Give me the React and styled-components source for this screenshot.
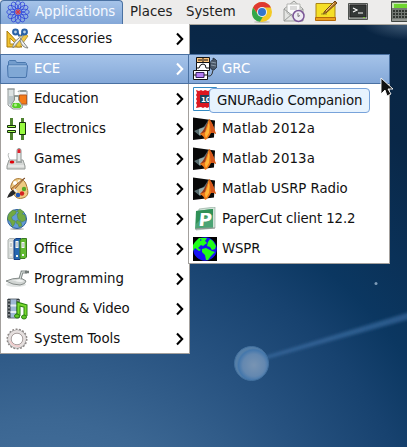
import React from "react";
import styled, { createGlobalStyle, css } from "styled-components";

const GlobalStyle = createGlobalStyle`
  * { box-sizing: border-box; }
  body { margin: 0; overflow: hidden; }
`;

const Desktop = styled.main`
  position: relative;
  width: 407px;
  height: 447px;
  overflow: hidden;
  font: 13.33px/20px "DejaVu Sans", sans-serif;
  color: #111;
  background:
    radial-gradient(ellipse 46px 18px at 407px 22px, #48627c, transparent),
    radial-gradient(circle at 40px 610px, #527da9 0, #3c6793 190px, #275280 300px, #17426f 390px, #0b3761 445px, #0a3158 500px, #092747 590px, #092441 700px);
`;

const Wallpaper = styled.svg`
  position: absolute;
  inset: 0;
`;

const Panel = styled.header`
  position: relative;
  display: flex;
  width: 407px;
  height: 25px;
  background: #edeceb;
  border-bottom: 1px solid #aaa79f;
`;

const selected = css`
  color: #fff;
  background: linear-gradient(#a5c3e9, #84a8d8);
`;

const PanelMenu = styled.button`
  display: flex;
  flex: none;
  align-items: center;
  height: 24px;
  width: ${(p) => p.$width}px;
  padding: 0 0 1px ${(p) => p.$inset}px;
  border: 0;
  background: transparent;
  color: #222;
  font: inherit;
  white-space: nowrap;
  ${(p) => p.$open && css`
    ${selected}
    color: #f4f8ff;
    letter-spacing: -0.1px;
    border: 1px solid #4a71a2;
    border-bottom: 0;
    border-radius: 4px 4px 0 0;
    gap: 5px;
  `}
`;

const Launchers = styled.div`
  display: flex;
  flex: none;
  gap: 8px;
  margin-left: 6px;
`;

const Menu = styled.nav`
  position: absolute;
  left: ${(p) => p.$x}px;
  top: ${(p) => p.$y}px;
  width: ${(p) => p.$width}px;
  border: 1px solid #a3a09d;
  border-top-width: ${(p) => (p.$flush ? 0 : 1)}px;
  background: #fff;
`;

const Item = styled.div`
  display: flex;
  align-items: center;
  height: 30px;
  padding: 0 3px 0 ${(p) => p.$inset}px;
  gap: ${(p) => p.$gap || 4}px;
  margin: 0 -1px;
  white-space: nowrap;
  &:first-child { margin-top: -${(p) => p.$lift || 0}px; }
  &:last-child { margin-bottom: -1px; }
  svg { flex: none; }
  ${(p) => p.$active && css`
    ${selected}
    border: 1px solid #4a71a2;
    padding: 0 2px 0 ${p.$inset - 1}px;
  `}
`;

const Label = styled.span`
  flex: 1;
  letter-spacing: ${(p) => p.$tracking || 0}px;
`;

const Tooltip = styled.div`
  position: absolute;
  left: 209px;
  top: 88px;
  width: 161px;
  height: 25px;
  padding: 2px 7px;
  border: 1px solid #78a3da;
  border-radius: 4px;
  background: #e7f3fe;
  letter-spacing: -0.13px;
  white-space: nowrap;
`;

const Pointer = styled.svg`
  position: absolute;
  left: 380px;
  top: 77px;
`;

const Icon = ({ children, size = 24 }) => (
  <svg width={size} height={size} viewBox="0 0 24 24">{children}</svg>
);

const Arrow = ({ light }) => (
  <svg width="14" height="16" viewBox="0 0 14 16">
    <path d="M4 2.5 9.2 8 4 13.5" fill="none" stroke={light ? "#fff" : "#000"} strokeWidth="2.1" />
  </svg>
);

const Spiro = () => (
  <Icon>
    <circle cx="12" cy="12" r="9" fill="#8fa9e6" opacity=".5" />
    <g fill="none" stroke="#2338d8" strokeWidth="0.7">
      {[0, 30, 60, 90, 120, 150, 180, 210, 240, 270, 300, 330].map((a) => (
        <ellipse key={a} cx="12" cy="6" rx="2.8" ry="5.2" transform={`rotate(${a} 12 12)`} />
      ))}
    </g>
    <circle cx="12" cy="12" r="3" fill="#8088cd" />
    <path d="M12 9v6M9 12h6M10 10l4 4M14 10l-4 4" stroke="#d93843" />
  </Icon>
);

const Accessories = () => (
  <Icon>
    <path d="M1 4v16h15z" fill="#f2c332" stroke="#a97b08" />
    <path d="M4 11v6h6z" fill="#fff" stroke="#b88a12" />
    <path d="M16 6h2l4 3-8 11h-3l-1-2z" fill="#f1c945" stroke="#a47d1b" strokeWidth=".7" />
    <path d="m12 8 3 4 7 9q-6 0-8-8M18 8l-4 5-7 8q-1-5 6-10" fill="#eee" stroke="#858783" />
    <g fill="#bdd4e8" stroke="#2861a7" strokeWidth="2"><circle cx="9.5" cy="5" r="2.4" /><circle cx="18.5" cy="5" r="2.4" /></g>
    <path d="m11.500 6 2 3m3.500-3-2 3" stroke="#2861a7" strokeWidth="2" />
  </Icon>
);

const Folder = () => (
  <Icon>
    <path d="M2.5 19V4.500l1-1h6l1 2h9l1 1V9" fill="#739dcd" stroke="#4a78ae" />
    <path d="M1.5 9q0-1 1-1h18q1 0 1 1l-1 10q0 1.500-1.500 1.500H3.500Q2 20.500 2 19z" fill="#80a8d5" stroke="#4774ac" />
    <path d="M3 9h17.500" stroke="#b5d0ef" />
  </Icon>
);

const Education = () => (
  <Icon>
    <path d="M2 2h6v16q-3 4-6 0zM1 2h8" fill="#dce2e2" stroke="#929999" />
    <path d="M3 9h4v8H3z" fill="#b9c5c9" />
    <path d="M12 5q0-1 1-1h8v14h-8" fill="#eff2f1" stroke="#909897" />
    <path d="M13.500 8h7v9h-7z" fill="#f57b16" stroke="#b65b23" />
    <path d="M8.500 9v4L5 18q-1 3 2 4h7q4-1 2-4l-3.500-5V9z" fill="#eef3ed" stroke="#8a918b" />
    <path d="m7 16-1 3q0 2 2 2h6q2-1 1-3l-2-2z" fill="#54ce24" />
    <path d="M8 9h5M14 4h6" stroke="#858e8b" strokeWidth="1.500" />
    <circle cx="9.500" cy="18" r="1.500" fill="#b2ef8f" />
  </Icon>
);

const Electronics = () => (
  <Icon>
    <path d="M5.500 1v22M16.500 1v22" stroke="#4f832f" strokeWidth="3" />
    <path d="M0 9.500h11v5H0z" fill="#fff" />
    <path d="M1.500 8.500h8v2h-8zM1.500 13.500h8v2h-8z" fill="#a8ff53" stroke="#142f0b" />
    <path d="M13.500 5.500h6v12h-6z" fill="#98fb3f" stroke="#142f0b" />
  </Icon>
);

const Games = () => (
  <Icon>
    <path d="m3 13-2 6v3h18v-3l-2-6z" fill="#d5d8d6" stroke="#969b98" />
    <path d="M11 3.500q0-2 2-2t2 2V15h-4z" fill="#e6e9e8" stroke="#8b9290" />
    <path d="M11.500 3q1.500-2 3 0v3h-3z" fill="#df222c" />
    <path d="M10 15h6" stroke="#a0a6a5" strokeWidth="2" /><ellipse cx="6" cy="15" rx="2.300" ry="1.500" fill="#e00008" />
    <path d="M2 19h16" stroke="#f5f5f4" /><path d="M4 13Q1 8 3 6" fill="none" stroke="#b5b9b8" />
  </Icon>
);

const Graphics = () => (
  <Icon>
    <path d="M6 6C9-1 18 1 20 7s4 12-3 14-9-3-10-6-4-3-1-9z" fill="#eecb83" stroke="#a87735" />
    <circle cx="9" cy="6" r="2" fill="#fff" /><circle cx="13.500" cy="4.500" r="1.800" fill="#fbefd5" /><circle cx="12" cy="18" r="2.300" fill="#1d58bc" />
    <circle cx="16" cy="16.500" r="2.200" fill="#d52222" /><circle cx="18" cy="12" r="2.200" fill="#56aa25" />
    <path d="m19 1-12 13-2-2L17 2z" fill="#e1a35a" stroke="#6c3c19" strokeWidth=".7" />
    <path d="m7 13 3 3q-4 4-9 5 2-6 6-8" fill="#272829" /><path d="m8 12 3 3" stroke="#eee" strokeWidth="2" />
  </Icon>
);

const Internet = () => (
  <Icon>
    <ellipse cx="11" cy="22" rx="7" ry="1" fill="#bbb" />
    <circle cx="11" cy="12" r="9.500" fill="#639bd6" stroke="#2c5d9c" />
    <path d="m2.500 7 4-4 4 1-1 3-4 3 1 3 3 1-1 3-2 3-2-5-3-3zM11 4l3-2 4 3-2 2 3 1 1 5-4 2-4-3-1-5 2-1zM11 13l4 2 1 4-3 1-1-3-2-1z" fill="#72a941" stroke="#477e52" strokeWidth=".5" />
  </Icon>
);

const Office = () => (
  <Icon>
    <path d="M2 3 3.500 1.500h5V20L7 21.500H2z" fill="#d6dad8" stroke="#aeb3b0" />
    <path d="m8 3 2-1.500h5V21L14 22.500H8z" fill="#2467b0" stroke="#143d81" />
    <path d="m14 3 2-1.500h4.500V20L19 21.500h-5z" fill="#61b931" stroke="#397b20" />
    <path d="M3.500 5h3v6h-3zM9.500 4h3v7h-3zM15.500 5h3v6h-3z" fill="#f5f7f6" />
    <path d="M5 6v4M11 5v5M17 6v4" stroke="#9eaaa8" />
    <path d="M4 18h2M10 19h2M16 18h2" stroke="#edf3ee" strokeWidth="2" />
  </Icon>
);

const Programming = () => (
  <Icon>
    <ellipse cx="10" cy="17.500" rx="10" ry="2.500" fill="#e1e4e3" />
    <path d="M0 14q6-3 15-3l5 3q0 3-6 4Q7 18 0 14z" fill="#d1d5d3" stroke="#868c8a" />
    <path d="M5 13.500q5 0 9-1.500l4 2q-3 2-9 0z" fill="#f0f2f1" />
    <path d="m14 12 2-7h5" fill="none" stroke="#838b89" strokeWidth="3" /><path d="m14 12 2-7h5" fill="none" stroke="#dce1df" />
    <path d="M19 5h4" stroke="#737b79" strokeWidth="2.500" />
  </Icon>
);

const SoundVideo = () => (
  <Icon>
    <path d="M2 2h11v19H2z" fill="#9eb8d7" stroke="#6c747a" />
    <path d="M3 2v19M12 2v19" stroke="#333a3e" strokeWidth="3" /><path d="M3 3v18M12 3v18" stroke="#eee" strokeDasharray="1.500 2" />
    <path d="M4.500 8.500h6M4.500 15h6" stroke="#e6edf5" strokeWidth="2" />
    <path d="M12.500 19V7l7 2v10" fill="none" stroke="#28800e" strokeWidth="4" /><path d="M12.500 19V7l7 2v10" fill="none" stroke="#78d92e" strokeWidth="2" />
    <ellipse cx="11" cy="19" rx="2.500" ry="2" fill="#63c728" stroke="#28800e" /><ellipse cx="18" cy="20" rx="2.500" ry="2" fill="#63c728" stroke="#28800e" />
  </Icon>
);

const SystemTools = () => (
  <Icon>
    <circle cx="11" cy="12" r="9.500" fill="none" stroke="#8d8583" strokeWidth="2" strokeDasharray="1.800 1.516" />
    <circle cx="11" cy="12" r="7.500" fill="none" stroke="#929292" strokeWidth="4" />
    <circle cx="11" cy="12" r="7.500" fill="none" stroke="#e5dfde" strokeWidth="3" />
    <circle cx="11" cy="12" r="5.800" fill="#fff" stroke="#aaa09f" />
    <path d="M4 14q3 6 10 5" fill="none" stroke="#f1c9ca" strokeWidth="1.500" />
  </Icon>
);

const GRC = () => (
  <Icon>
    <path d="M3.500.5h13v5h-13z" fill="#ffc57c" stroke="#111" />
    <path d="M3.500 5.500h13v8h-13z" fill="#fff" stroke="#111" />
    <path d="M.5 13.500h14v9H.5z" fill="#fff" stroke="#111" /><path d="M3 15.500h8v5H3z" fill="#b47cf5" stroke="#34205b" />
    <path d="M5 3h4M11 3h4M10 1v4M4 11h2q1-4 4-4t3 4h3M1 18h2M11 18h3" fill="none" stroke="#111" />
    <path d="M14 19q4 1 5-2l1-4" fill="none" stroke="#333" />
    <path d="m18 12-1-3 1-5 2-1V1l2 1 2 2v6l-3 3z" fill="#4a5869" stroke="#182432" strokeWidth=".7" />
    <path d="m18 5 5 1m-5 2 5 1" stroke="#a8b7c6" strokeWidth=".7" />
  </Icon>
);

const ChipIcon = () => (
  <Icon>
    <path d="M.5.500h23v23H.5z" fill="#fff" stroke="#348ac2" />
    <path d="m3 3 3 1 2-1 2 1 2-1 3 1 2-1 4 2v15l-3 1-2-1-2 1-2-1-2 1-2-1-5 1 1-3-1-2 1-2-1-2 1-2-1-2 1-2z" fill="#dc1720" />
    <path d="M7 8h15v8H7z" fill="#1d435a" /><text x="8" y="14.500" fontFamily="DejaVu Sans" fontSize="7" fontWeight="bold" fill="#fff">10</text>
  </Icon>
);

const Matlab = () => (
  <Icon>
    <path d="m0 .5 22 3-1 17L0 23z" fill="#080808" />
    <path d="m1 14 7-3q4-1 7-8l-1 11-7 5z" fill="#586d70" /><path d="m6 12 6-2-3 7-3 1z" fill="#9aaeac" />
    <path d="M16 2q-3 10-9 15 4 2 5 6 3-1 6-7 2-1 5 1Q19 4 16 2" fill="#ef7919" />
    <path d="M16 2q-1 9-4 14 0 4 1 5l3-5q1-8 0-14" fill="#ffb638" />
    <path d="m16 2 2 14q2-1 5 1Q19 4 16 2" fill="#d6581d" /><path d="M15 4Q11 14 7 17l5-2z" fill="#94381d" />
  </Icon>
);

const PaperCut = () => (
  <Icon>
    <path d="m6 2 16-2v21L3 23z" fill="#d1e3d8" stroke="#8aa395" strokeWidth=".6" />
    <path d="m3 4 17-2v19L2 22z" fill="#4ba474" />
    <path d="m3 4 17-2v6Q9 9 3 17z" fill="#2f9056" />
    <text x="5" y="19" fontFamily="DejaVu Sans" fontSize="18" fontWeight="bold" fill="#fff" transform="translate(2 0) skewX(-6)">P</text>
    <path d="M2 22q8-1 20-1" stroke="#9b9f9b" />
  </Icon>
);

const WSPR = () => (
  <Icon>
    <path d="M0 0h24v24H0z" fill="#000" /><circle cx="12" cy="12" r="11.800" fill="#1714f2" />
    <path d="m2 5 4-4 8 0-2 3 2 2-4 3-2-1-3 3 3 2-2 1-4-3-2 3V8zM17 2l3 2 3 5-1 3-3 1-2-3-3-1 1-4zM9 12l4-1 6 3 3 1-4 4-3 4h-2l-1-5-3-3z" fill="#20ff19" />
    <path d="m7 2 2 1-2 1z" fill="#1714f2" />
  </Icon>
);

const Chrome = () => (
  <Icon>
    <ellipse cx="12" cy="22" rx="8" ry="1" fill="#c3c2bf" />
    <circle cx="12" cy="12" r="10" fill="#f3ca24" />
    <path d="M3 7.500Q6 2 12 2t9 5.500H12L8 14z" fill="#df3931" />
    <path d="m3 7.500 5 7 5 2-3 5.300Q3 21 2 14q-.4-3 1-6.500" fill="#34a74b" />
    <circle cx="12" cy="12" r="5" fill="#eef3f7" /><circle cx="12" cy="12" r="4" fill="#3376ce" />
  </Icon>
);

const Mail = () => (
  <Icon>
    <path d="M2 9 12 1l9 8v12H2z" fill="#e4e5e3" stroke="#9b9d9a" /><path d="M5 4h13v9l-7 4-6-4z" fill="#fafafa" stroke="#b4b5b2" />
    <path d="m2 9 9 7 10-7M2 21l8-7M21 21l-8-7" fill="none" stroke="#979997" />
    <path d="M8 7h7M8 9h7" stroke="#bbb" /><circle cx="16.500" cy="16" r="5.500" fill="#eeebf2" stroke="#7b5698" strokeWidth="1.500" />
    <path d="M16 13v3.500l2-1" fill="none" stroke="#777" />
  </Icon>
);

const Notes = () => (
  <Icon>
    <path d="M2 3.500h19V18H2z" fill="#f5df27" stroke="#aa8515" /><path d="M1.500 17.500h20v3h-20z" fill="#eba01d" stroke="#b66b08" />
    <path d="M11 11 21 1l2 2-11 10-3 1z" fill="#b8792d" stroke="#6e4719" /><path d="m12 11 8-8" stroke="#f1c67b" />
    <path d="M7 14h6" stroke="#a2901d" />
  </Icon>
);

const Terminal = () => (
  <Icon>
    <path d="M2.500 3.500h19v16h-19z" fill="#aaa" stroke="#505451" /><path d="M4 5h16v12H4z" fill="#343837" stroke="#222" />
    <path d="m7 8 4 2-4 2M12 13h5" fill="none" stroke="#fff" strokeWidth="1.200" /><path d="M4 18h16" stroke="#777e76" /><path d="M17 17.500h2" stroke="#7bcb31" />
  </Icon>
);

const Calculator = () => (
  <Icon>
    <path d="M1.500 1.500h22v20h-22z" fill="#747974" stroke="#414641" /><path d="M2 3h22v5H2z" fill="#c5eaae" /><path d="M4 4h20v4H4z" fill="#6fd52f" />
    <path d="M3 11h21M3 14h21M3 17h21" stroke="#303530" strokeWidth="2" strokeDasharray="2 1" /><path d="M2 20h22" stroke="#b0b4ae" />
  </Icon>
);

const categories = [
  ["Accessories", Accessories], ["ECE", Folder], ["Education", Education, -0.2],
  ["Electronics", Electronics, -0.08], ["Games", Games], ["Graphics", Graphics, -0.1],
  ["Internet", Internet, -0.1], ["Office", Office], ["Programming", Programming, 0.02],
  ["Sound & Video", SoundVideo, -0.22], ["System Tools", SystemTools, -0.06],
];

const programs = [
  ["GRC", GRC], ["", ChipIcon], ["Matlab 2012a", Matlab, 0.12], ["Matlab 2013a", Matlab, 0.12],
  ["Matlab USRP Radio", Matlab, -0.06], ["PaperCut client 12.2", PaperCut, -0.1], ["WSPR", WSPR, -0.15],
];

const LastLauncher = styled.div`
  margin-left: 12px;
`;

export default function App() {
  return (
    <Desktop>
      <GlobalStyle />
      <Wallpaper width="407" height="447">
        <defs>
          <filter id="soft"><feGaussianBlur stdDeviation="1.500" /></filter>
          <radialGradient id="orb" cx="57%" cy="55%"><stop stopColor="#7894b3" /><stop offset=".65" stopColor="#6488b0" /><stop offset=".9" stopColor="#4477ac" /><stop offset="1" stopColor="#557fa8" /></radialGradient>
          <linearGradient id="beam"><stop stopColor="#36669a" /><stop offset="1" stopColor="#285889" /></linearGradient>
        </defs>
        <path d="m266 356 144-44v7l-144 40z" fill="url(#beam)" filter="url(#soft)" />
        <circle cx="251.500" cy="363.500" r="17" fill="url(#orb)" stroke="#42709e" />
        <circle cx="376" cy="283.500" r="1.500" fill="#7e9bb8" />
      </Wallpaper>
      <Panel>
        <PanelMenu $open $width={123} $inset={5}><Spiro />Applications</PanelMenu>
        <PanelMenu $width={56} $inset={7}>Places</PanelMenu>
        <PanelMenu $width={65} $inset={7}>System</PanelMenu>
        <Launchers>
          <Chrome /><Mail /><Notes /><Terminal />
          <LastLauncher><Calculator /></LastLauncher>
        </Launchers>
      </Panel>
      <Menu $x={0} $y={24} $width={190} $flush>
        {categories.map(([name, Drawing, tracking]) => (
          <Item key={name} $inset={6} $active={name === "ECE"}>
            <Drawing /><Label $tracking={tracking}>{name}</Label><Arrow light={name === "ECE"} />
          </Item>
        ))}
      </Menu>
      <Menu $x={188} $y={54} $width={202}>
        {programs.map(([name, Drawing, tracking], i) => (
          <Item key={i} $inset={5} $gap={5} $lift={1} $active={i === 0}>
            <Drawing /><Label $tracking={tracking}>{name}</Label>
          </Item>
        ))}
      </Menu>
      <Tooltip>GNURadio Companion</Tooltip>
      <Pointer width="14" height="20" viewBox="0 0 14 20">
        <path d="M1 1v16l4-4 2 6 4-2-3-5h5z" fill="#111" stroke="#fff" strokeWidth=".9" />
      </Pointer>
    </Desktop>
  );
}
